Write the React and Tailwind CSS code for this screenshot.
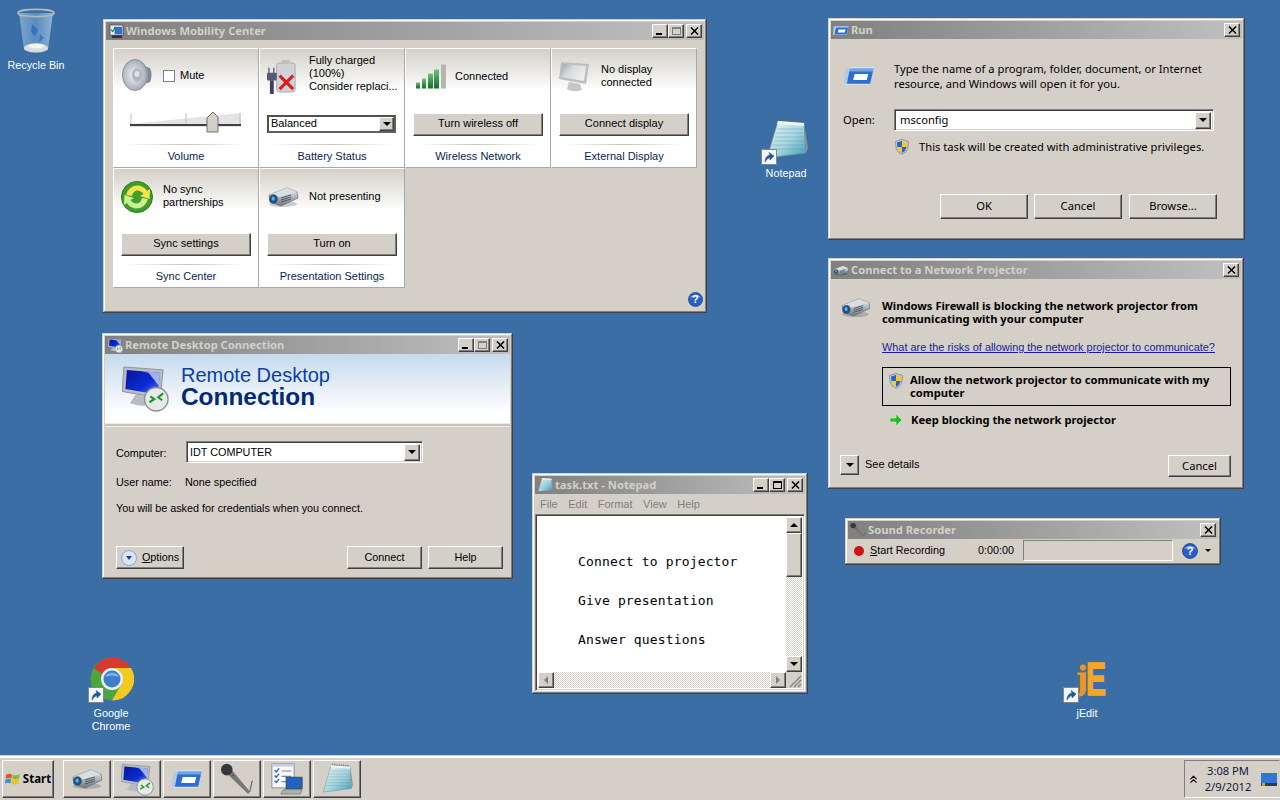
import React from 'react';

const raised = 'bg-[#d4d0c8] border border-t-white border-l-white border-r-[#404040] border-b-[#404040] shadow-[inset_-1px_-1px_0_#808080]';
const sunken = 'border border-t-[#808080] border-l-[#808080] border-r-white border-b-white shadow-[inset_1px_1px_0_#404040,inset_-1px_-1px_0_#d4d0c8]';
const win = 'absolute flex flex-col p-[3px] bg-[#d4d0c8] shadow-[inset_-1px_-1px_0_#404040,inset_1px_1px_0_#d4d0c8,inset_-2px_-2px_0_#808080,inset_2px_2px_0_#ffffff]';
const segoe = "font-['Liberation_Sans',sans-serif] text-[11px]";
const segoeSmall = "font-['Liberation_Sans',sans-serif] text-[10.8px]";
const checker = 'bg-[repeating-conic-gradient(#ffffff_0_25%,#d4d0c8_0_50%)] bg-size-[2px_2px]';

// --- icons ---
const Projector = ({ className }) => (
  <svg viewBox="0 0 32 22" className={className}>
    <defs>
      <linearGradient id="pj" x1="0" y1="0" x2="0" y2="1">
        <stop offset="0" stopColor="#f2f4f6" />
        <stop offset="1" stopColor="#6d7680" />
      </linearGradient>
    </defs>
    <ellipse cx="16" cy="18" rx="14" ry="3" fill="#000" opacity="0.18" />
    <path d="M2 9 L20 2 L30 6 L31 12 L14 20 L3 16 Z" fill="url(#pj)" stroke="#59636d" strokeWidth="0.6" />
    <path d="M2 9 L20 2 L30 6 L13 11 Z" fill="#d9dee2" />
    <ellipse cx="6.5" cy="13" rx="3.8" ry="4.2" fill="#1c4f86" stroke="#44505c" strokeWidth="0.8" />
    <ellipse cx="6.2" cy="12.6" rx="1.7" ry="2.2" fill="#4cb2f0" />
    <path d="M14 12 L24 9 M14 14 L24 11 M14 16 L24 13" stroke="#46505a" strokeWidth="0.9" />
  </svg>
);

const RemoteMonitor = ({ className }) => (
  <svg viewBox="0 0 48 48" className={className}>
    <defs>
      <linearGradient id="rm" x1="0" y1="0" x2="1" y2="1">
        <stop offset="0" stopColor="#06149a" />
        <stop offset="0.6" stopColor="#0a2cd4" />
        <stop offset="1" stopColor="#5d82ee" />
      </linearGradient>
    </defs>
    <path d="M2 2 L42 5 L39 34 L0 27 Z" fill="#b9bdc3" stroke="#7d838a" strokeWidth="0.8" />
    <path d="M5 5 L39 8 L36.5 30 L3.5 24.5 Z" fill="url(#rm)" />
    <path d="M20 6.3 L39 8 L37.5 21 L27 8 Z" fill="#e4eafc" opacity="0.7" />
    <path d="M14 30 L32 33 L34 39 Q22 44 8 39 Z" fill="#b9bdc1" />
    <circle cx="35" cy="35" r="12" fill="#e8eaea" stroke="#8b9095" strokeWidth="1.4" />
    <path d="M28 38 L33 35 L29 32 M42 29 L37 33 L41 36" fill="none" stroke="#1f9a2a" strokeWidth="2.2" />
  </svg>
);

const RunIcon = ({ className }) => (
  <svg viewBox="0 0 32 20" className={className}>
    <path d="M4 1 L31 1 L27 19 L0 19 Z" fill="#dbe7f6" opacity="0.85" />
    <path d="M6 2 L31 2 L30 5 L5 5 Z" fill="#6fa6e6" />
    <path d="M5 5 L30 5 L27 18 L2 18 Z" fill="#2c6fd2" />
    <path d="M11 8 L25 8 L23.5 14 L9.5 14 Z" fill="#fff" />
    <path d="M1 2 L6 2 L3 18 L0 18 Z" fill="#b8c8da" />
  </svg>
);

const NotepadIcon = ({ className }) => (
  <svg viewBox="0 0 44 44" className={className}>
    <defs>
      <linearGradient id="np" x1="0" y1="0" x2="1" y2="1">
        <stop offset="0" stopColor="#f0f8f8" />
        <stop offset="0.55" stopColor="#a6d6de" />
        <stop offset="1" stopColor="#3f9db4" />
      </linearGradient>
    </defs>
    <path d="M14 3 L40 5 L42 35 L3 40 Z" fill="url(#np)" stroke="#6d8d98" strokeWidth="0.7" />
    <path d="M40 5 L44 30 L42 35 Z" fill="#8a9297" />
    <path d="M13 11 L39 11 M12 15 L39.5 15 M11 19 L40 19 M10 23 L40 23 M8.5 27 L40.5 27 M7 31 L41 31" stroke="#5f93b5" strokeWidth="0.6" opacity="0.7" />
    <path d="M16 3 L16 1 M19 3 L19 1 M22 3.5 L22 1.5 M25 3.5 L25 1.5 M28 4 L28 2 M31 4 L31 2 M34 4.5 L34 2.5 M37 4.5 L37 2.5" stroke="#59656c" strokeWidth="1.2" />
    <path d="M14 3 L40 5 L40 8 L13 6 Z" fill="#eef3f4" />
  </svg>
);

const Shield = ({ className }) => (
  <svg viewBox="0 0 14 16" className={className}>
    <path d="M7 0.5 L13.5 2.5 L13 9 Q12 13 7 15.5 Q2 13 1 9 L0.5 2.5 Z" fill="#c4c8ce" stroke="#6b7480" strokeWidth="0.6" />
    <path d="M7 2 L2 3.4 L2.4 8 L7 8 Z" fill="#2b63c8" />
    <path d="M7 2 L12 3.4 L11.7 8 L7 8 Z" fill="#f3c92c" />
    <path d="M2.4 8 L7 8 L7 14 Q3.3 12 2.4 8 Z" fill="#f3c92c" />
    <path d="M11.7 8 L7 8 L7 14 Q10.7 12 11.7 8 Z" fill="#2b63c8" />
  </svg>
);

const ShortcutArrow = ({ className }) => (
  <svg viewBox="0 0 16 16" className={className}>
    <rect x="0.5" y="0.5" width="15" height="15" fill="#f4f6f9" stroke="#7c8794" />
    <path d="M4 13 Q4 7 9 6 L8 3.5 L13 7 L9 11 L9 8.5 Q6 9 4 13 Z" fill="#1d5ca8" stroke="#123f77" strokeWidth="0.5" />
  </svg>
);

const HelpCircle = ({ className }) => (
  <svg viewBox="0 0 16 16" className={className}>
    <circle cx="8" cy="8" r="7.5" fill="#2a5fc8" stroke="#17367e" strokeWidth="0.7" />
    <path d="M2 6 Q8 0 14 6 Q8 4 2 6 Z" fill="#a9c6f3" />
    <text x="8" y="12" textAnchor="middle" fontSize="11" fontWeight="700" fill="#fff" fontFamily="Liberation Sans">?</text>
  </svg>
);

const Mic = ({ className }) => (
  <svg viewBox="0 0 40 36" className={className}>
    <path d="M9 12 L14 8 L35 33 L33 35 Z" fill="#75787c" stroke="#55585c" strokeWidth="0.5" />
    <path d="M35 33 L38 20" stroke="#55585c" strokeWidth="1.2" />
    <circle cx="8" cy="7" r="6.8" fill="#34373b" />
    <circle cx="15" cy="14" r="1.2" fill="#d62020" />
  </svg>
);

const TaskIcon = ({ className }) => (
  <svg viewBox="0 0 36 36" className={className}>
    <rect x="1" y="1" width="25" height="27" fill="#f6f8fb" stroke="#7e8791" />
    <rect x="1" y="1" width="25" height="3" fill="#c8ced6" />
    <path d="M4 8 L6 10 L9 6 M4 14 L6 16 L9 12 M4 20 L6 22 L9 18" fill="none" stroke="#2c62c6" strokeWidth="1.5" />
    <path d="M12 9 H23 M12 15 H23 M12 21 H18" stroke="#7e8791" strokeWidth="1.3" />
    <rect x="17" y="16" width="18" height="13" fill="#1d62c4" stroke="#3e454c" />
    <path d="M14 30 L35 30 L33 35 L11 35 Z" fill="#aab0b6" stroke="#555c63" strokeWidth="0.6" />
  </svg>
);

const StartFlag = ({ className }) => (
  <svg viewBox="0 0 18 16" className={className}>
    <path d="M1 3 Q4 1 8 3 L7 7.5 Q4 6 0.5 7.5 Z" fill="#e2562a" />
    <path d="M9 3.2 Q13 5 17 2 L16 7 Q12.5 9.5 8 7.8 Z" fill="#8abb2a" />
    <path d="M0.3 8.5 Q4 7 7 8.5 L6 13 Q3 11.5 0 13 Z" fill="#3d8fdc" />
    <path d="M8 9 Q12 10.5 15.8 8 L15 13 Q11 15 7 13.5 Z" fill="#f4bd20" />
  </svg>
);

const RecycleBin = ({ className }) => (
  <svg viewBox="0 0 38 46" className={className}>
    <defs>
      <linearGradient id="rb" x1="0" y1="0" x2="1" y2="0">
        <stop offset="0" stopColor="#8fb2d6" />
        <stop offset="0.5" stopColor="#5f94c6" />
        <stop offset="1" stopColor="#a8c2dc" />
      </linearGradient>
    </defs>
    <path d="M2 5 L36 5 L31 42 Q19 47 7 42 Z" fill="url(#rb)" opacity="0.8" />
    <path d="M15 16 L21 22 L18 28 L14 24 Z M23 26 L27 30 L22 34 Z" fill="#2c62c0" opacity="0.7" />
    <ellipse cx="19" cy="40" rx="12" ry="4.5" fill="#d8dcdd" />
    <ellipse cx="19" cy="38" rx="8" ry="2.4" fill="#f3f4f4" />
    <ellipse cx="19" cy="5" rx="18" ry="3.6" fill="none" stroke="#b4b7b9" strokeWidth="1.6" />
  </svg>
);

const Chrome = ({ className }) => (
  <svg viewBox="0 0 44 44" className={className}>
    <circle cx="22" cy="22" r="21.5" fill="#4aa63e" />
    <path d="M4 11 A21.5 21.5 0 0 1 41 11 L22 11 A11 11 0 0 0 12 17 Z" fill="#d9392e" />
    <path d="M41 11 A21.5 21.5 0 0 1 22 43.5 L32 26 A11 11 0 0 0 22 11 Z" fill="#f4ca1e" />
    <circle cx="22" cy="22" r="11" fill="#e9eef3" />
    <circle cx="22" cy="22" r="8.5" fill="#3d80c8" />
    <path d="M15 20 A8 8 0 0 1 29 20 Q22 17 15 20 Z" fill="#7fb3e6" />
  </svg>
);

const JEdit = ({ className }) => (
  <svg viewBox="0 0 32 38" className={className}>
    <text x="0" y="29" fontSize="34" fontWeight="700" fontFamily="Liberation Serif" fill="#f0941e" stroke="#f0941e" strokeWidth="1">j</text>
    <text x="10" y="35" fontSize="46" fontWeight="700" fontFamily="Liberation Sans" fill="#f6a623" stroke="#f6a623" strokeWidth="1.5" textLength="20" lengthAdjust="spacingAndGlyphs">E</text>
  </svg>
);

const Speaker = ({ className }) => (
  <svg viewBox="0 0 31 32" className={className}>
    <defs>
      <radialGradient id="sp" cx="0.45" cy="0.5" r="0.6">
        <stop offset="0" stopColor="#f0f2f4" />
        <stop offset="1" stopColor="#97a1ac" />
      </radialGradient>
    </defs>
    <path d="M14 4 L28 9 Q31 16 28 23 L14 28 Z" fill="#7f8892" />
    <path d="M24 9 Q27 16 24 23" fill="none" stroke="#c4c9ce" strokeWidth="1.2" />
    <ellipse cx="13" cy="16" rx="12.5" ry="15.5" fill="url(#sp)" stroke="#7c8590" strokeWidth="0.8" />
    <ellipse cx="15" cy="16" rx="5" ry="6.5" fill="#aeb6bf" />
    <ellipse cx="15" cy="15" rx="2.5" ry="3" fill="#dfe3e6" />
  </svg>
);

const BatteryX = ({ className }) => (
  <svg viewBox="0 0 32 36" className={className}>
    <rect x="10" y="4" width="19" height="30" rx="3" fill="#d0d3d6" stroke="#a6abb0" />
    <rect x="15" y="1" width="9" height="4" fill="#bcc0c4" />
    <path d="M2 9 V15 M7 9 V15" stroke="#6b6f80" strokeWidth="1.6" />
    <rect x="0" y="14" width="10" height="8" rx="1" fill="#565a78" />
    <rect x="3" y="22" width="4" height="14" fill="#3f4363" />
    <path d="M13 17 L27 31 M27 17 L13 31" stroke="#d81e1e" strokeWidth="3.2" />
  </svg>
);

const SignalBars = ({ className }) => (
  <svg viewBox="0 0 30 24" className={className}>
    <defs>
      <linearGradient id="sg" x1="0" y1="0" x2="0" y2="1">
        <stop offset="0" stopColor="#6cc47c" />
        <stop offset="1" stopColor="#0a6e26" />
      </linearGradient>
    </defs>
    <rect x="0" y="18" width="4" height="6" fill="url(#sg)" />
    <rect x="6" y="14" width="4" height="10" fill="url(#sg)" />
    <rect x="12" y="9" width="5" height="15" fill="url(#sg)" />
    <rect x="18" y="5" width="5" height="19" fill="url(#sg)" />
    <rect x="25" y="0" width="5" height="24" fill="#b4b6b4" />
  </svg>
);

const GrayMonitor = ({ className }) => (
  <svg viewBox="0 0 32 32" className={className}>
    <defs>
      <linearGradient id="gm" x1="0" y1="0" x2="1" y2="0.6">
        <stop offset="0" stopColor="#9ea2a4" />
        <stop offset="0.45" stopColor="#d8dadb" />
        <stop offset="1" stopColor="#eeeeee" />
      </linearGradient>
    </defs>
    <path d="M2 1 L30 3 L27 23 L0 18 Z" fill="#bcbfc0" />
    <path d="M4 3 L27 5 L25 20 L2 16 Z" fill="url(#gm)" />
    <path d="M10 21 L21 23 L23 29 Q14 32 8 28 Z" fill="#c4c6c7" />
  </svg>
);

const SyncIcon = ({ className }) => (
  <svg viewBox="0 0 32 32" className={className}>
    <circle cx="16" cy="16" r="15.5" fill="#3f9e2e" stroke="#2a7a1e" />
    <path d="M5 14 Q8 4 18 4.5 Q24 6 26 10 L29 8 L28.5 18 L19 15 L22.5 13 Q20 9.5 16 9.5 Q12 10 11 15 Z" fill="#f3e548" />
    <path d="M27 18 Q24 28 14 27.5 Q8 26 6 22 L3 24 L3.5 14 L13 17 L9.5 19 Q12 22.5 16 22.5 Q20 22 21 17 Z" fill="#cdf08e" />
  </svg>
);

const Triangle = () => (
  <span className="w-0 h-0 border-x-[4px] border-x-transparent border-t-[4px] border-t-black" />
);

// --- chrome ---
const TitleBtn = ({ kind, off }) => (
  <div className={raised + ' w-[16px] h-[14px] relative flex items-center justify-center'}>
    {kind === 'min' && <span className="absolute left-[3px] bottom-[2px] w-[6px] h-[2px] bg-black" />}
    {kind === 'max' && <span className={'w-[9px] h-[8px] border border-t-2 ' + (off ? 'border-[#808080]' : 'border-black')} />}
    {kind === 'close' && (
      <svg viewBox="0 0 10 9" className="w-[9px] h-[8px]">
        <path d="M1 0.5 L9 8.5 M9 0.5 L1 8.5" stroke="#000" strokeWidth="1.6" />
      </svg>
    )}
  </div>
);

const TitleBar = ({ title, icon, full, maxOff }) => (
  <div className="h-[18px] shrink-0 flex items-center pl-[2px] pr-[2px] bg-gradient-to-r from-[#808080] to-[#c0c0c0]">
    <span className="w-[16px] h-[16px] mr-[2px] flex items-center justify-center shrink-0">{icon}</span>
    <span className="flex-1 text-[11.2px] font-bold text-[#d4d0c8] whitespace-nowrap">{title}</span>
    {full && <TitleBtn kind="min" />}
    {full && <TitleBtn kind="max" off={maxOff} />}
    <div className={full ? 'ml-[2px]' : ''}><TitleBtn kind="close" /></div>
  </div>
);

const Btn = ({ className, children }) => (
  <div className={raised + ' flex items-center justify-center text-black ' + className}>{children}</div>
);

const Combo = ({ value, className }) => (
  <div className={sunken + ' bg-white flex items-center pr-[2px] ' + className}>
    <span className="flex-1 text-black">{value}</span>
    <div className={raised + ' w-[16px] h-[17px] flex items-center justify-center'}><Triangle /></div>
  </div>
);

const Tile = ({ icon, text, control, title }) => (
  <div className="h-[120px] flex flex-col border border-t-white border-l-white border-r-[#a8a8a8] border-b-[#a8a8a8] bg-[linear-gradient(180deg,#d4d0c8_0,#ffffff_42px)]">
    <div className="h-[55px] flex items-center pl-[7px]">
      <div className="w-[42px] shrink-0">{icon}</div>
      <div className="leading-[13px] text-[#000] whitespace-nowrap">{text}</div>
    </div>
    <div className="h-[24px] mt-[8px] px-[7px] flex items-center">{control}</div>
    <div className="h-px mx-[11px] mt-[8px] bg-gradient-to-r from-transparent via-[#c8c4bc] to-transparent" />
    <div className="flex-1 flex items-center justify-center text-[#0a1f4a]">{title}</div>
  </div>
);

const DeskIcon = ({ className, icon, label, arrowClass, labelClass }) => (
  <div className={'absolute flex flex-col items-center text-white leading-[13px] text-center ' + segoeSmall + ' ' + className}>
    <div className="relative">
      {icon}
      {arrowClass && <ShortcutArrow className={'absolute w-[16px] h-[16px] ' + arrowClass} />}
    </div>
    <div className={labelClass}>{label}</div>
  </div>
);

const TaskBtn = ({ className, children }) => (
  <div className={raised + ' h-[38px] flex items-center justify-center ' + className}>{children}</div>
);

export default function App() {
  return (
    <div className="relative w-[1280px] h-[800px] overflow-hidden bg-[#3a6ea5] font-['Noto_Sans',sans-serif] text-[11.2px] text-black">
      <DeskIcon className="left-[6px] top-[8px] w-[60px]" labelClass="mt-[5px]" icon={<RecycleBin className="w-[38px] h-[46px]" />} label="Recycle Bin" />
      <DeskIcon className="left-[756px] top-[118px] w-[60px]" labelClass="mt-[5px]" arrowClass="bottom-[-3px] left-[-3px]" icon={<NotepadIcon className="w-[44px] h-[44px]" />} label="Notepad" />
      <DeskIcon className="left-[81px] top-[657px] w-[60px]" labelClass="mt-[6px]" arrowClass="bottom-[-2px] left-0" icon={<Chrome className="w-[44px] h-[44px] ml-[2px]" />} label={<span>Google<br />Chrome</span>} />
      <DeskIcon className="left-[1057px] top-[660px] w-[60px]" labelClass="mt-[9px]" arrowClass="bottom-[-5px] left-[-3px]" icon={<JEdit className="w-[32px] h-[38px] ml-[10px] overflow-visible" />} label="jEdit" />

      {/* Mobility Center */}
      <div className={win + ' left-[103px] top-[19px] w-[604px] h-[294px]'}>
        <TitleBar full maxOff title="Windows Mobility Center" icon={<svg viewBox="0 0 16 16" className="w-[15px] h-[15px]"><rect x="1" y="1" width="14" height="11" fill="#e8eef8" stroke="#555" /><rect x="6" y="3" width="8" height="8" fill="#2f6fd0" /><path d="M2 6 L4 8 L7 3" fill="none" stroke="#1a8a2a" strokeWidth="1.4" /><rect x="3" y="12" width="11" height="3" fill="#333" /></svg>} />
        <div className={'relative flex-1 ' + segoe}>
          <div className="grid grid-cols-[repeat(4,146px)] ml-[7px] mt-[8px]">
            <Tile
              icon={<Speaker className="w-[31px] h-[32px] ml-[1px] -mt-[3px]" />}
              text={<div className="flex items-center -mt-[2px]"><span className="w-[12px] h-[12px] bg-white border border-[#808080] mr-[5px]" />Mute</div>}
              control={
                <svg viewBox="0 -2 112 24" className="w-[112px] h-[24px] ml-[9px]">
                  <path d="M0 10 L111 -1 L111 10 Z" fill="#e4e4e4" />
                  <path d="M1 -1 V10 M56 -1 V10 M110 -1 V10" stroke="#c0c0c0" />
                  <rect x="0" y="10" width="111" height="2" fill="#404040" />
                  <rect x="0" y="12" width="111" height="1" fill="#e4e2dc" />
                  <path d="M77 4 L83 -2 L88 3 L88 18 L77 18 Z" fill="#d4d0c8" stroke="#707070" />
                </svg>
              }
              title="Volume"
            />
            <Tile
              icon={<BatteryX className="w-[31px] h-[35px]" />}
              text={<div className="-mt-[6px]">Fully charged<br />(100%)<br />Consider replaci...</div>}
              control={
                <div className="w-[129px] h-[18px] flex items-center bg-white border-2 border-t-[#505050] border-l-[#505050] border-r-[#606060] border-b-[#606060] pl-[2px]">
                  <span className="flex-1 pb-px">Balanced</span>
                  <div className={raised + ' w-[15px] h-[14px] flex items-center justify-center'}><Triangle /></div>
                </div>
              }
              title="Battery Status"
            />
            <Tile
              icon={<SignalBars className="w-[30px] h-[25px] ml-[3px] -mt-[1px]" />}
              text="Connected"
              control={<Btn className="w-[130px] h-[23px] pb-px">Turn wireless off</Btn>}
              title="Wireless Network"
            />
            <Tile
              icon={<GrayMonitor className="w-[32px] h-[32px]" />}
              text={<div className="-mt-[2px]">No display<br />connected</div>}
              control={<Btn className="w-[130px] h-[23px] pb-px">Connect display</Btn>}
              title="External Display"
            />
            <Tile
              icon={<SyncIcon className="w-[32px] h-[32px]" />}
              text={<div className="-mt-[2px]">No sync<br />partnerships</div>}
              control={<Btn className="w-[130px] h-[23px] pb-px">Sync settings</Btn>}
              title="Sync Center"
            />
            <Tile
              icon={<Projector className="w-[32px] h-[22px]" />}
              text="Not presenting"
              control={<Btn className="w-[130px] h-[23px] pb-px">Turn on</Btn>}
              title="Presentation Settings"
            />
          </div>
          <HelpCircle className="absolute right-[1px] bottom-[3px] w-[15px] h-[15px]" />
        </div>
      </div>

      {/* Remote Desktop */}
      <div className={win + ' left-[102px] top-[333px] w-[411px] h-[246px]'}>
        <TitleBar full maxOff title="Remote Desktop Connection" icon={<RemoteMonitor className="w-[15px] h-[15px]" />} />
        <div className="h-[69px] flex items-center pl-[17px] bg-[linear-gradient(180deg,#c6d9ee_0,#ffffff_85%)]">
          <RemoteMonitor className="w-[47px] h-[47px]" />
          <div className="ml-[12px] font-['Liberation_Sans',sans-serif] -mt-[6px]">
            <div className="text-[20px] leading-[22px] text-[#0a3fa8]">Remote Desktop</div>
            <div className="text-[24.4px] leading-[21px] font-bold text-[#00297a]">Connection</div>
          </div>
        </div>
        <div className="h-[4px] border-y border-[#eeece6] bg-[#c8c4bc]" />
        <div className={'flex-1 flex flex-col pl-[11px] pr-[7px] ' + segoeSmall}>
          <div className="flex items-center mt-[14px]">
            <span className="w-[70px] mt-[2px]">Computer:</span>
            <Combo value="IDT COMPUTER" className="w-[237px] h-[22px] pl-[3px]" />
          </div>
          <div className="flex mt-[11px]">
            <span className="w-[69px]">User name:</span>
            <span>None specified</span>
          </div>
          <div className="mt-[14px] -translate-y-[4px]">You will be asked for credentials when you connect.</div>
          <div className="mt-auto mb-[7px] flex">
            <Btn className="w-[68px] h-[23px]">
              <span className="w-[16px] h-[16px] mr-[5px] rounded-full bg-[#dbe3f4] border border-[#8ea4cf] flex items-center justify-center"><span className="w-0 h-0 border-x-[3px] border-x-transparent border-t-[4px] border-t-[#2b3f90]" /></span>
              <span><u>O</u>ptions</span>
            </Btn>
            <Btn className="w-[75px] h-[23px] ml-auto pb-px">Connect</Btn>
            <Btn className="w-[75px] h-[23px] ml-[6px] pb-px">Help</Btn>
          </div>
        </div>
      </div>

      {/* Notepad */}
      <div className={win + ' left-[532px] top-[473px] w-[276px] h-[221px]'}>
        <TitleBar full title="task.txt - Notepad" icon={<NotepadIcon className="w-[16px] h-[16px]" />} />
        <div className="h-[20px] flex items-center text-[#808080] pl-[5px] gap-[10.5px] font-['Liberation_Sans',sans-serif] text-[11px]">
          <span>File</span><span>Edit</span><span>Format</span><span>View</span><span>Help</span>
        </div>
        <div className={sunken + ' flex-1 relative bg-white p-[2px]'}>
          <div className="h-full pr-[16px] pb-[16px] pl-[40px] pt-[26px] font-['DejaVu_Sans_Mono',monospace] text-[13px] tracking-[0.15px] leading-[39px] whitespace-nowrap">
            <div className="-mt-[1px]">Connect to projector</div>
            <div>Give presentation</div>
            <div>Answer questions</div>
          </div>
          {/* vertical scrollbar */}
          <div className={'absolute right-[2px] top-[2px] bottom-[18px] w-[16px] flex flex-col ' + checker}>
            <div className={raised + ' h-[16px] flex items-center justify-center'}><span className="w-0 h-0 border-x-[4px] border-x-transparent border-b-[4px] border-b-black" /></div>
            <div className={raised + ' h-[44px]'} />
            <div className={raised + ' h-[16px] mt-auto flex items-center justify-center'}><Triangle /></div>
          </div>
          {/* horizontal scrollbar */}
          <div className={'absolute left-[2px] right-[18px] bottom-[2px] h-[16px] flex ' + checker}>
            <div className={raised + ' w-[16px] flex items-center justify-center'}><span className="w-0 h-0 border-y-[4px] border-y-transparent border-r-[4px] border-r-[#808080]" /></div>
            <div className={raised + ' w-[16px] ml-auto flex items-center justify-center'}><span className="w-0 h-0 border-y-[4px] border-y-transparent border-l-[4px] border-l-[#808080]" /></div>
          </div>
          <div className="absolute right-[2px] bottom-[2px] w-[16px] h-[16px] bg-[#d4d0c8]">
            <svg viewBox="0 0 16 16" className="w-full h-full"><path d="M15 4 L4 15 M15 8 L8 15 M15 12 L12 15" stroke="#808080" strokeWidth="1.2" /></svg>
          </div>
        </div>
      </div>

      {/* Run */}
      <div className={win + ' left-[828px] top-[18px] w-[417px] h-[222px]'}>
        <TitleBar title="Run" icon={<RunIcon className="w-[16px] h-[11px]" />} />
        <div className="flex-1 flex flex-col pl-[12px]">
          <div className="flex mt-[22px]">
            <RunIcon className="w-[31px] h-[20px] mt-[5px] ml-[1px]" />
            <div className="ml-[19px] leading-[15px]">Type the name of a program, folder, document, or Internet<br />resource, and Windows will open it for you.</div>
          </div>
          <div className="flex items-center mt-[18px]">
            <span className="w-[51px]">Open:</span>
            <Combo value="msconfig" className="w-[320px] h-[22px] pl-[5px]" />
          </div>
          <div className="flex items-center mt-[8px] ml-[52px]">
            <Shield className="w-[14px] h-[16px]" />
            <span className="ml-[10px]">This task will be created with administrative privileges.</span>
          </div>
          <div className="flex mt-[38px] ml-[97px] gap-[6px]">
            <Btn className="w-[88px] h-[25px]">OK</Btn>
            <Btn className="w-[88px] h-[25px]">Cancel</Btn>
            <Btn className="w-[88px] h-[25px] ml-px">Browse...</Btn>
          </div>
        </div>
      </div>

      {/* Network Projector */}
      <div className={win + ' left-[828px] top-[258px] w-[416px] h-[231px]'}>
        <TitleBar title="Connect to a Network Projector" icon={<Projector className="w-[16px] h-[11px]" />} />
        <div className="flex-1 flex flex-col pl-[9px] pr-[10px]">
          <div className="flex mt-[20px]">
            <Projector className="w-[31px] h-[21px] -mt-[2px]" />
            <div className="ml-[11px] font-bold leading-[13px] whitespace-nowrap">Windows Firewall is blocking the network projector from<br />communicating with your computer</div>
          </div>
          <div className={"ml-[42px] mt-[14px] text-[#1a1aa0] underline whitespace-nowrap font-['Liberation_Sans',sans-serif] text-[10.9px]"}>What are the risks of allowing the network projector to communicate?</div>
          <div className="ml-[42px] mt-[12px] h-[39px] border border-black flex pl-[6px] pt-[5px]">
            <Shield className="w-[14px] h-[16px] shrink-0" />
            <div className="ml-[7px] font-bold leading-[13px]">Allow the network projector to communicate with my<br />computer</div>
          </div>
          <div className="ml-[49px] mt-[7px] flex items-center h-[14px]">
            <svg viewBox="0 0 14 14" className="w-[14px] h-[14px] shrink-0">
              <path d="M1 5 H7 V1 L13 7 L7 13 V9 H1 Z" fill="#1fc226" stroke="#d8e8d0" strokeWidth="0.6" />
            </svg>
            <span className="ml-[8px] font-bold whitespace-nowrap">Keep blocking the network projector</span>
          </div>
          <div className="mt-auto mb-[9px] flex items-start">
            <Btn className="w-[19px] h-[20px]"><Triangle /></Btn>
            <span className={'ml-[6px] leading-[18px] ' + segoe}>See details</span>
            <Btn className="w-[63px] h-[22px] ml-auto">Cancel</Btn>
          </div>
        </div>
      </div>

      {/* Sound Recorder */}
      <div className={win + ' left-[845px] top-[518px] w-[376px] h-[47px]'}>
        <TitleBar title="Sound Recorder" icon={<Mic className="w-[16px] h-[16px]" />} />
        <div className="flex-1 flex items-center pl-[6px]">
          <span className="w-[10px] h-[10px] rounded-full bg-[#d01018]" />
          <span className={'ml-[6px] w-[108px] ' + segoeSmall}><u>S</u>tart Recording</span>
          <span className={'w-[45px] ' + segoeSmall}>0:00:00</span>
          <div className={sunken + ' w-[150px] h-[21px] !shadow-none'} />
          <HelpCircle className="w-[16px] h-[16px] ml-[9px]" />
          <span className="ml-[7px] w-0 h-0 border-x-[3px] border-x-transparent border-t-[3px] border-t-black" />
        </div>
      </div>

      {/* Taskbar */}
      <div className="absolute left-0 right-0 bottom-0 h-[44px] flex items-center bg-[#d4d0c8] border-t-2 border-t-white pl-[2px] shadow-[0_-1px_0_#d4d0c8]">
        <TaskBtn className="w-[52px]">
          <StartFlag className="w-[16px] h-[14px] mr-[2px]" />
          <span className="font-bold text-[11.5px]">Start</span>
        </TaskBtn>
        <div className="flex gap-[2px] ml-[9px]">
          <TaskBtn className="w-[48px]"><Projector className="w-[32px] h-[22px]" /></TaskBtn>
          <TaskBtn className="w-[48px]"><RemoteMonitor className="w-[33px] h-[33px]" /></TaskBtn>
          <TaskBtn className="w-[48px]"><RunIcon className="w-[31px] h-[20px]" /></TaskBtn>
          <TaskBtn className="w-[48px]"><Mic className="w-[34px] h-[32px]" /></TaskBtn>
          <TaskBtn className="w-[48px]"><TaskIcon className="w-[32px] h-[32px]" /></TaskBtn>
          <TaskBtn className="w-[48px]"><NotepadIcon className="w-[32px] h-[32px]" /></TaskBtn>
        </div>
        <div className="ml-auto w-[96px] h-[38px] flex items-center border border-t-[#808080] border-l-[#808080] border-r-transparent border-b-white pl-[5px]">
          <svg viewBox="0 0 8 9" className="w-[7px] h-[9px]"><path d="M0.5 4 L4 0.8 L7.5 4 M0.5 8 L4 4.8 L7.5 8" fill="none" stroke="#000" strokeWidth="1.3" /></svg>
          <div className="w-[62px] text-center leading-[16px] text-[#101840]">3:08 PM<br />2/9/2012</div>
          <svg viewBox="0 0 16 13" className="w-[16px] h-[13px] ml-[2px]"><rect width="16" height="13" fill="#2f78cf" /><rect y="10" width="16" height="3" fill="#303a44" /><rect x="1" y="10" width="3" height="3" fill="#e3a21a" /></svg>
        </div>
      </div>
    </div>
  );
}
